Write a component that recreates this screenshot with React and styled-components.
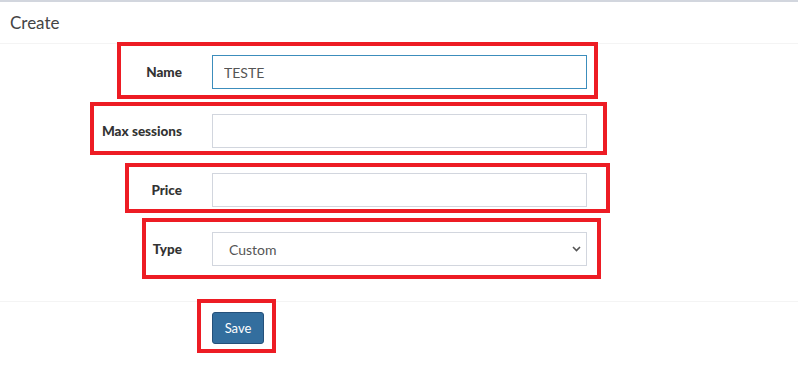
import React from "react";
import styled, { createGlobalStyle } from "styled-components";

const GlobalStyle = createGlobalStyle`
	body {
		margin: 0;
		background: #fff;
		font-family: Lato, "Open Sans", sans-serif;
		color: #333;
	}
`;

const Box = styled.div`
	position: relative;
	width: 798px;
	height: 366px;
	border-top: 2px solid #d2d6de;
	box-sizing: border-box;
	background: #fff;
`;

const Header = styled.div`
	height: 41px;
	display: flex;
	align-items: center;
	padding-left: 10px;
	border-bottom: 1px solid #f4f4f4;
	font-size: 17px;
	color: #444;
`;

const Body = styled.div`
	padding: 11px 0 35px;
	display: flex;
	flex-direction: column;
	gap: 25px;
`;

const Row = styled.div`
	display: grid;
	grid-template-columns: 182px 375px;
	column-gap: 30px;
	align-items: center;
`;

const Label = styled.label`
	text-align: right;
	font-weight: 900;
	font-size: 13.5px;
	color: #333;
`;

const Input = styled.input`
	box-sizing: border-box;
	height: 34px;
	width: 100%;
	padding: 0 11px;
	border: 1px solid ${(p) => (p.focused ? "#3c8dbc" : "#d2d6de")};
	border-radius: 0;
	font-family: Lato, sans-serif;
	font-size: 14px;
	color: #555;
	outline: none;
`;

const SelectWrap = styled.div`
	position: relative;
	height: 34px;
`;

const Select = styled.select`
	appearance: none;
	box-sizing: border-box;
	height: 34px;
	width: 100%;
	padding: 0 16px;
	border: 1px solid #d2d6de;
	border-radius: 0;
	background: #fff;
	font-family: Lato, sans-serif;
	font-size: 14px;
	color: #555;
	outline: none;
`;

const Chevron = styled.svg`
	position: absolute;
	right: 6px;
	top: 14px;
	pointer-events: none;
`;

const Footer = styled.div`
	border-top: 1px solid #f4f4f4;
	padding: 10px 0 0 212px;
`;

const SaveButton = styled.button`
	box-sizing: border-box;
	width: 52px;
	height: 32px;
	background: #336e9e;
	border: 1px solid #24507a;
	border-radius: 3px;
	color: #fff;
	font-family: Lato, sans-serif;
	font-size: 13px;
`;

const Highlight = styled.div`
	position: absolute;
	box-sizing: border-box;
	border: 4.5px solid #ed1c24;
	pointer-events: none;
`;

const highlights = [
	{ left: 117, top: 40, width: 481, height: 57 },
	{ left: 90, top: 100, width: 517, height: 53 },
	{ left: 125, top: 161, width: 485, height: 50 },
	{ left: 142, top: 216, width: 459, height: 61 },
	{ left: 197, top: 297, width: 79, height: 54 },
];

const App = () => {
	return (
		<>
			<GlobalStyle />
			<Box>
				<Header>Create</Header>
				<Body>
					<Row>
						<Label>Name</Label>
						<Input focused defaultValue="TESTE" />
					</Row>
					<Row>
						<Label>Max sessions</Label>
						<Input />
					</Row>
					<Row>
						<Label>Price</Label>
						<Input />
					</Row>
					<Row>
						<Label>Type</Label>
						<SelectWrap>
							<Select defaultValue="custom">
								<option value="custom">Custom</option>
							</Select>
							<Chevron width="9" height="6" viewBox="0 0 9 6">
								<path d="M1 1l3.5 3.5L8 1" fill="none" stroke="#555" strokeWidth="1.6" />
							</Chevron>
						</SelectWrap>
					</Row>
				</Body>
				<Footer>
					<SaveButton>Save</SaveButton>
				</Footer>
				{highlights.map((h, i) => (
					<Highlight key={i} style={h} />
				))}
			</Box>
		</>
	);
};

export default App;
